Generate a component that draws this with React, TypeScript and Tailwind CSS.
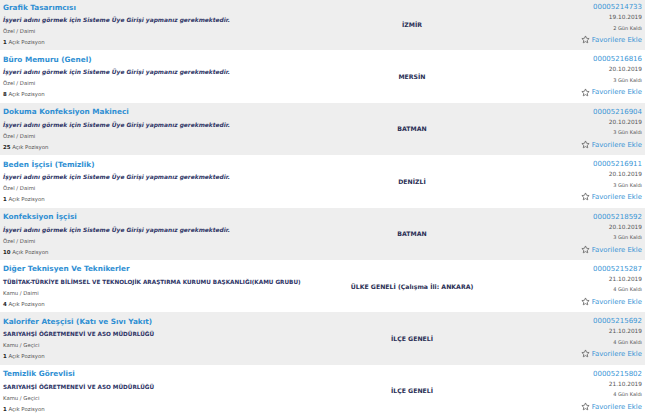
import React from "react";

type Job = {
  title: string;
  employer: string;
  hidden: boolean;
  type: string;
  count: number;
  city: string;
  no: string;
  date: string;
  left: string;
};

const HIDDEN = "İşyeri adını görmek için Sisteme Üye Girişi yapmanız gerekmektedir.";
const SARIYAHSI = "SARIYAHŞİ ÖĞRETMENEVİ VE ASO MÜDÜRLÜĞÜ";

const jobs: Job[] = [
  { title: "Grafik Tasarımcısı", employer: HIDDEN, hidden: true, type: "Özel / Daimi", count: 1, city: "İZMİR", no: "00005214733", date: "19.10.2019", left: "2 Gün Kaldı" },
  { title: "Büro Memuru (Genel)", employer: HIDDEN, hidden: true, type: "Özel / Daimi", count: 8, city: "MERSİN", no: "00005216816", date: "20.10.2019", left: "3 Gün Kaldı" },
  { title: "Dokuma Konfeksiyon Makineci", employer: HIDDEN, hidden: true, type: "Özel / Daimi", count: 25, city: "BATMAN", no: "00005216904", date: "20.10.2019", left: "3 Gün Kaldı" },
  { title: "Beden İşçisi (Temizlik)", employer: HIDDEN, hidden: true, type: "Özel / Daimi", count: 1, city: "DENİZLİ", no: "00005216911", date: "20.10.2019", left: "3 Gün Kaldı" },
  { title: "Konfeksiyon İşçisi", employer: HIDDEN, hidden: true, type: "Özel / Daimi", count: 10, city: "BATMAN", no: "00005218592", date: "20.10.2019", left: "3 Gün Kaldı" },
  { title: "Diğer Teknisyen Ve Teknikerler", employer: "TÜBİTAK-TÜRKİYE BİLİMSEL VE TEKNOLOJİK ARAŞTIRMA KURUMU BAŞKANLIĞI(KAMU GRUBU)", hidden: false, type: "Kamu / Daimi", count: 4, city: "ÜLKE GENELİ (Çalışma İli: ANKARA)", no: "00005215287", date: "21.10.2019", left: "4 Gün Kaldı" },
  { title: "Kalorifer Ateşçisi (Katı ve Sıvı Yakıt)", employer: SARIYAHSI, hidden: false, type: "Kamu / Geçici", count: 1, city: "İLÇE GENELİ", no: "00005215692", date: "21.10.2019", left: "4 Gün Kaldı" },
  { title: "Temizlik Görevlisi", employer: SARIYAHSI, hidden: false, type: "Kamu / Geçici", count: 1, city: "İLÇE GENELİ", no: "00005215802", date: "21.10.2019", left: "4 Gün Kaldı" },
];

function StarIcon() {
  return (
    <svg width="9" height="9" viewBox="0 0 24 24" className="inline-block mr-[2px] -mt-[1px] align-middle">
      <path
        d="M12 2.5l2.9 6.2 6.8.8-5 4.7 1.3 6.7L12 17.6l-6 3.3 1.3-6.7-5-4.7 6.8-.8z"
        fill="none"
        stroke="#666"
        strokeWidth="2.2"
        strokeLinejoin="round"
      />
    </svg>
  );
}

function JobRow({ job, odd }: { job: Job; odd: boolean }) {
  return (
    <div className={`flex h-[52.4px] w-[645px] ${odd ? "bg-[#eeeeee]" : "bg-white"}`}>
      <div className="w-[330px] pl-[3px] pt-[3.5px] whitespace-nowrap">
        <div className="text-[7.3px] leading-[11px] font-bold text-[#2f8fd3]">{job.title}</div>
        <div
          className={`mt-[2.5px] leading-[11px] font-bold text-[#2e3566] ${
            job.hidden ? "italic text-[5.9px]" : "text-[5.7px]"
          }`}
        >
          {job.employer}
        </div>
        <div className="text-[5.3px] leading-[11px] text-[#555]">{job.type}</div>
        <div className="text-[5.4px] leading-[11px] text-[#555]">
          <span className="font-bold text-[#222]">{job.count}</span> Açık Pozisyon
        </div>
      </div>
      <div className="w-[164px] flex items-center justify-center whitespace-nowrap">
        <span className="text-[6.2px] font-bold text-[#2b2f55]">{job.city}</span>
      </div>
      <div className="flex-1 pr-[3px] pt-[4px] text-right whitespace-nowrap">
        <div className="text-[7px] leading-[10px] text-[#3a95d6]">{job.no}</div>
        <div className="text-[5.8px] leading-[10.5px] text-[#555]">{job.date}</div>
        <div className="text-[5px] leading-[10.5px] text-[#555]">{job.left}</div>
        <div className="mt-[2px] text-[6.9px] leading-[11px] text-[#3a95d6]">
          <StarIcon />
          Favorilere Ekle
        </div>
      </div>
    </div>
  );
}

export default function App() {
  return (
    <div className="w-[650px] h-[413px] overflow-hidden bg-white font-['DejaVu_Sans',Verdana,sans-serif]">
      <div className="-mt-[2px]">
        {jobs.map((job, i) => (
          <JobRow key={job.no} job={job} odd={i % 2 === 0} />
        ))}
      </div>
    </div>
  );
}
